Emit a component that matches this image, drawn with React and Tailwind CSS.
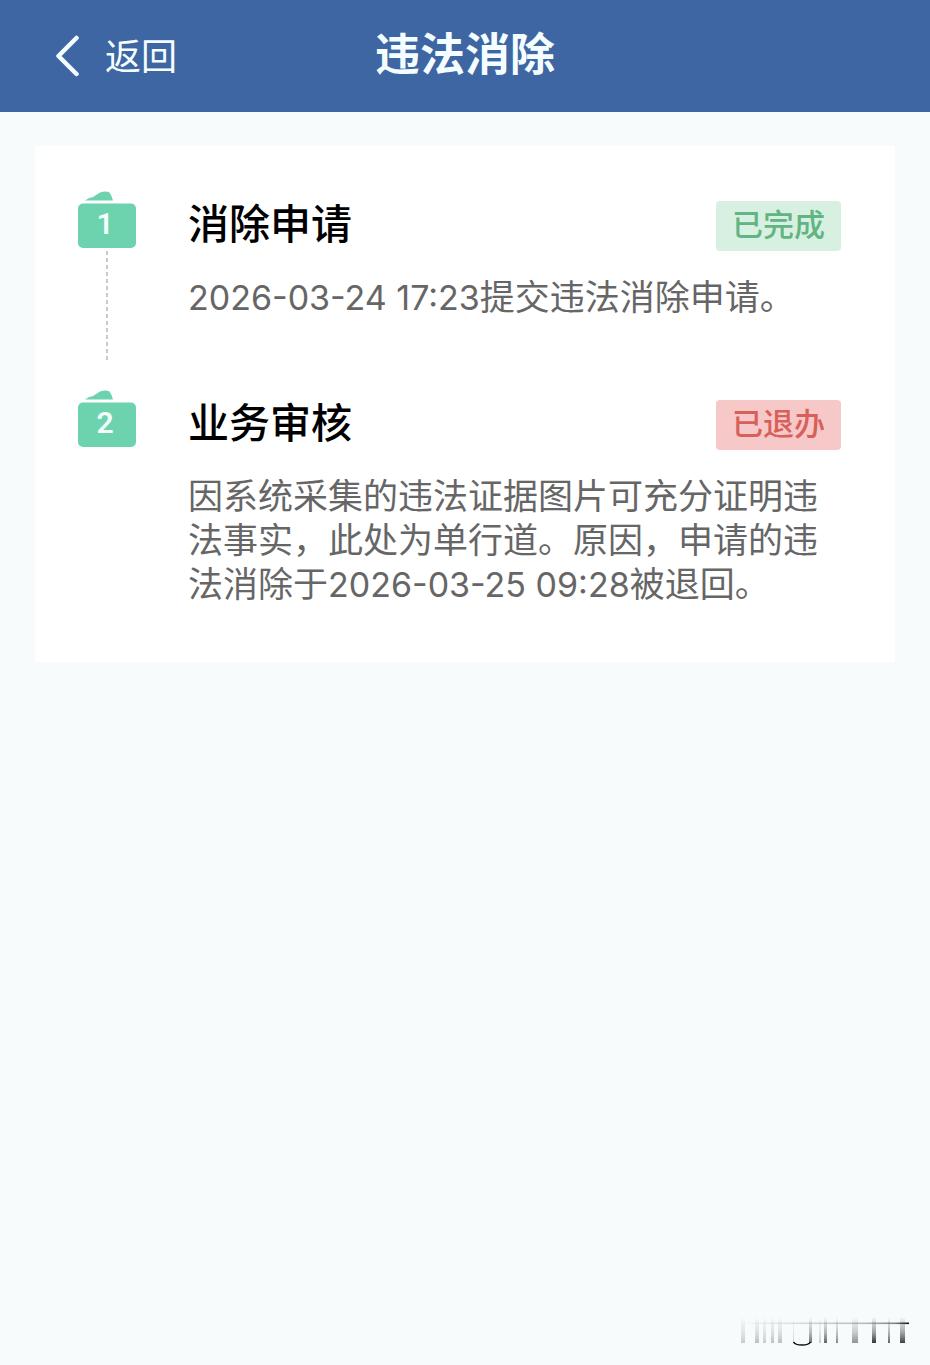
import React from "react";

const steps = [
  {
    title: "消除申请",
    status: "已完成",
    tone: "bg-[#d8f0e1] text-[#62b482]",
    body: [{ text: "2026-03-24 17:23", latin: true }, { text: "提交违法消除申请。" }],
  },
  {
    title: "业务审核",
    status: "已退办",
    tone: "bg-[#f6c9c8] text-[#d8605a]",
    body: [
      { text: "因系统采集的违法证据图片可充分证明违法事实，此处为单行道。原因，申请的违法消除于" },
      { text: "2026-03-25 09:28", latin: true },
      { text: "被退回。" },
    ],
  },
];

function StepIcon({ number }) {
  return (
    <div className="grid w-[60px] shrink-0">
      <svg className="col-start-1 row-start-1" width="60" height="58" viewBox="0 0 60 58" aria-hidden="true">
        <path d="M8 9.5 L12 7 L16 6 L23 1.5 Q29 -0.5 32.5 1.5 Q34.5 4 36 9.5 Z" fill="#6dd3ae" />
        <rect x="1" y="12.5" width="58" height="44.5" rx="5" fill="#6dd3ae" />
      </svg>
      <span className="col-start-1 row-start-1 self-center pt-2 pr-1 text-center font-['Roboto','Noto_Sans_CJK_SC',sans-serif] text-[30px] leading-8 font-semibold text-[#f4fffb]">
        {number}
      </span>
    </div>
  );
}

function Step({ step, number, last }) {
  return (
    <li className="flex gap-[51px]">
      <div className="flex flex-col items-center">
        <StepIcon number={number} />
        {!last && (
          <div className="mt-[2px] mb-7 w-[2px] flex-1 bg-[repeating-linear-gradient(to_bottom,#c9c9c9_0_4px,transparent_4px_7px)]" />
        )}
      </div>
      <div className={last ? "min-w-0 flex-1 pt-[10px]" : "min-w-0 flex-1 pt-[10px] pb-[73px]"}>
        <div className="flex items-start justify-between">
          <h2 className="text-[41px] leading-[40px] font-medium text-black">{step.title}</h2>
          <span className={`rounded-[4px] px-4 pb-[6px] text-[31px] leading-[44px] font-medium ${step.tone}`}>
            {step.status}
          </span>
        </div>
        <p className="mt-[22px] mr-5 text-[35px] leading-[44px] text-[#666666]">
          {step.body.map((part) =>
            part.latin ? (
              <span key={part.text} className="font-['Inter',sans-serif] text-[34px] leading-none">
                {part.text}
              </span>
            ) : (
              part.text
            )
          )}
        </p>
      </div>
    </li>
  );
}

function Watermark() {
  const bars = [
    [2, 4, 0.2], [16, 4, 0.25], [24, 3, 0.2], [32, 3, 0.25], [39, 4, 0.25],
    [54, 1, 0.2], [70, 3, 0.6], [80, 2, 0.2], [85, 3, 0.65], [97, 2, 0.5],
    [113, 6, 0.45], [133, 4, 0.85], [149, 2, 0.65], [161, 5, 0.8],
  ];
  return (
    <svg width="176" height="36" viewBox="0 0 176 36" aria-hidden="true">
      <defs>
        <linearGradient id="barFade" x1="0" y1="0" x2="0" y2="1">
          <stop offset="0" stopColor="#222" stopOpacity="0" />
          <stop offset="0.6" stopColor="#222" stopOpacity="0.5" />
          <stop offset="1" stopColor="#111" stopOpacity="1" />
        </linearGradient>
        <linearGradient id="lineFade" x1="0" y1="0" x2="1" y2="0">
          <stop offset="0" stopColor="#222" stopOpacity="0" />
          <stop offset="0.75" stopColor="#222" stopOpacity="0.3" />
          <stop offset="0.92" stopColor="#222" stopOpacity="0.55" />
          <stop offset="1" stopColor="#111" stopOpacity="1" />
        </linearGradient>
      </defs>
      {bars.map(([x, w, o]) => (
        <rect key={x} x={x} y="2" width={w} height="26" fill="url(#barFade)" opacity={o} />
      ))}
      <rect x="0" y="7.5" width="170" height="1.6" fill="url(#lineFade)" />
      <path d="M54.5 27 Q56 30 63 30 Q70 30 71.5 27" fill="none" stroke="#111" strokeWidth="1.6" />
    </svg>
  );
}

export default function App() {
  return (
    <div className="flex min-h-screen flex-col bg-[#f7fbfc] font-['Noto_Sans_CJK_SC',sans-serif]">
      <header className="grid h-28 grid-cols-[1fr_auto_1fr] items-center bg-[#3e66a2] text-[#f4fdff]">
        <button type="button" className="flex items-center gap-[25px] justify-self-start pl-[55px] text-[36px] leading-[44px]">
          <svg width="25" height="42" viewBox="0 0 25 42" fill="none" aria-hidden="true">
            <path d="M21.5 3 L3.5 21 L21.5 39" stroke="currentColor" strokeWidth="4.5" strokeLinecap="round" strokeLinejoin="round" />
          </svg>
          <span className="pb-1">返回</span>
        </button>
        <h1 className="pb-2 text-[45px] leading-[54px] font-bold">违法消除</h1>
      </header>
      <main className="px-[35px] pt-[34px]">
        <ol className="bg-white pt-[45px] pr-[54px] pb-[58px] pl-[42px]">
          {steps.map((step, i) => (
            <Step key={step.title} step={step} number={i + 1} last={i === steps.length - 1} />
          ))}
        </ol>
      </main>
      <footer className="mt-auto flex justify-end pr-[15px] pb-[14px]">
        <Watermark />
      </footer>
    </div>
  );
}
